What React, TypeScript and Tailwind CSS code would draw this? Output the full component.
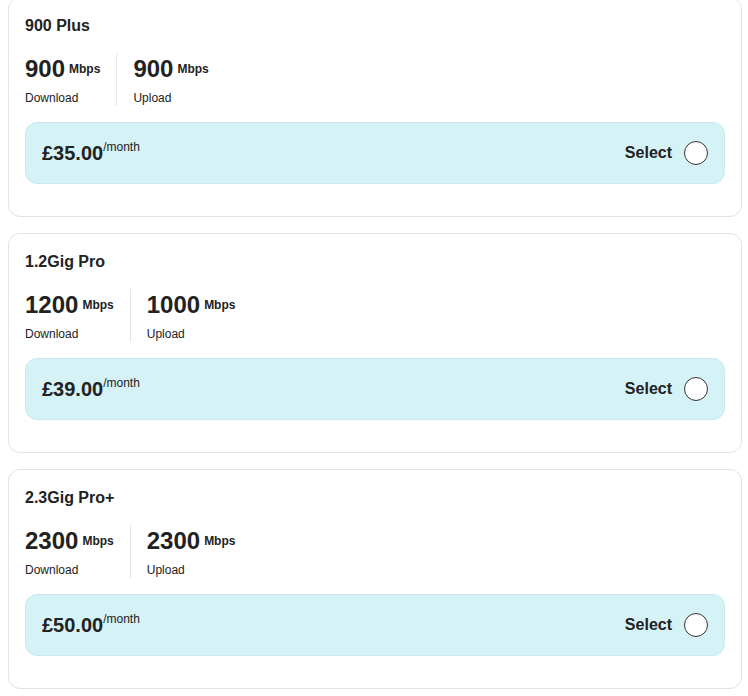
import React from 'react';

const plans = [
  { name: '900 Plus', down: '900', up: '900', price: '£35.00' },
  { name: '1.2Gig Pro', down: '1200', up: '1000', price: '£39.00' },
  { name: '2.3Gig Pro+', down: '2300', up: '2300', price: '£50.00' },
];

function Speed({ value, label, first }: { value: string; label: string; first?: boolean }) {
  return (
    <div className={first ? 'pr-4 border-r border-[#e5e5e5]' : 'pl-4'}>
      <div className="flex items-center">
        <span className="text-[24px] leading-8 font-bold">{value}</span>
        <span className="ml-1 text-[12px] font-bold">Mbps</span>
      </div>
      <div className="mt-[5px] text-[12px] leading-4">{label}</div>
    </div>
  );
}

export default function App() {
  return (
    <div
      className="min-h-screen bg-white text-[#222] pl-2 pr-[6px] -mt-[3px] flex flex-col gap-4"
      style={{ fontFamily: '"Liberation Sans", Arial, sans-serif' }}
    >
      {plans.map((p) => (
        <div key={p.name} className="border border-[#e2e2e2] rounded-xl px-4 pt-4 pb-8">
          <div className="text-[16px] leading-6 font-bold">{p.name}</div>
          <div className="mt-[15px] flex">
            <Speed value={p.down} label="Download" first />
            <Speed value={p.up} label="Upload" />
          </div>
          <div className="mt-4 flex items-center justify-between rounded-xl border border-[#c9e9ee] bg-[#d5f3f7] px-4 py-4">
            <div className="flex items-start">
              <span className="text-[20px] leading-7 font-bold">{p.price}</span>
              <span className="text-[12px] leading-4">/month</span>
            </div>
            <div className="flex items-center gap-3">
              <span className="text-[16px] font-bold">Select</span>
              <span className="w-6 h-6 rounded-full border-[1.5px] border-[#333] bg-white" />
            </div>
          </div>
        </div>
      ))}
    </div>
  );
}
